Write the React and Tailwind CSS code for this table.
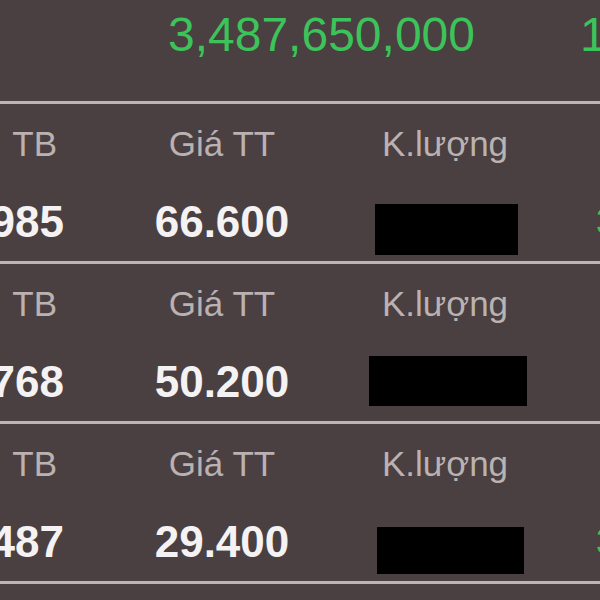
const rows = [
  { avg: '1.985', price: '66.600', box: 'w-[143px] h-[51px] mt-[21px] ml-[2px]', change: '3' },
  { avg: '1.768', price: '50.200', box: 'w-[158px] h-[50px] mt-[13px] ml-[6px]', change: '' },
  { avg: '1.487', price: '29.400', box: 'w-[147px] h-[47px] mt-[24px] ml-[10px]', change: '3' },
];

function Block({ row }) {
  return (
    <div className="border-t-[3px] border-[#bdb5b5]">
      {/* labels */}
      <div className="flex h-[79px] items-center ml-[-98px] text-[35px] text-[#bab2b2]">
        <div className="w-[208px] shrink-0 flex justify-end pr-[53px]">
          <span>Giá</span>
          <span className="ml-[26px]">TB</span>
        </div>
        <div className="w-[224px] shrink-0 text-center">Giá TT</div>
        <div className="w-[222px] shrink-0 text-center">K.lượng</div>
      </div>
      {/* values */}
      <div className="flex h-[78px] ml-[-98px] text-[44px] font-bold text-[#f4f2f2]">
        <div className="w-[208px] shrink-0 self-center text-right pr-[46px]">{row.avg}</div>
        <div className="w-[224px] shrink-0 self-center text-center">{row.price}</div>
        <div className="w-[222px] shrink-0 flex justify-center">
          <div className={`bg-black self-start ${row.box}`} />
        </div>
        <div className="shrink-0 self-center pl-[40px] text-[36px] text-[#3dbf5a] font-normal whitespace-nowrap">
          {row.change}
        </div>
      </div>
    </div>
  );
}

export default function App() {
  return (
    <div
      className="w-[600px] h-[600px] overflow-hidden bg-[#4a3f41] leading-none"
      style={{ fontFamily: '"Liberation Sans", Arial, sans-serif' }}
    >
      <div className="h-[101px] flex items-start pt-[11px] text-[48px] text-[#3cc35a] whitespace-nowrap">
        <span className="ml-[168px]">3,487,650,000</span>
        <span className="ml-[105px]">1,245,300,000</span>
      </div>
      {rows.map((r, i) => (
        <Block key={i} row={r} />
      ))}
      <div className="border-t-[3px] border-[#bdb5b5] h-[40px]" />
    </div>
  );
}
